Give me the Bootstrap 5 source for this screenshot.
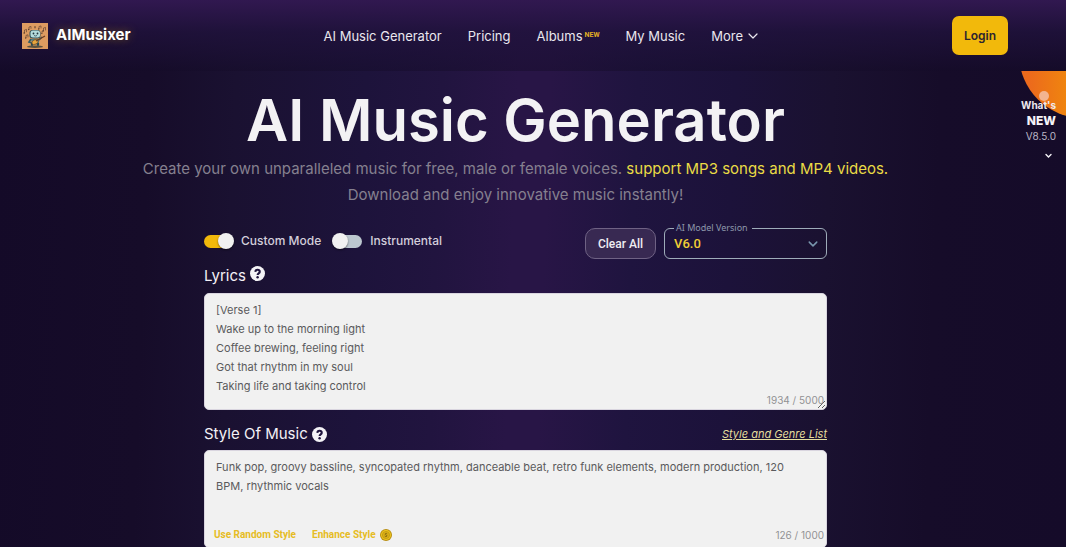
<!DOCTYPE html>
<html lang="en">
<head>
<meta charset="utf-8">
<meta name="viewport" content="width=device-width, initial-scale=1">
<title>AI Music Generator - AIMusixer</title>
<link href="https://cdn.jsdelivr.net/npm/bootstrap@5.3.0/dist/css/bootstrap.min.css" rel="stylesheet">
<style>
  :root { --gold: #f2b90b; --paper: #f1f1f1; }
  body {
    font-family: Inter, "Liberation Sans", sans-serif;
    color: #f1f1f3;
    min-height: 100vh;
    overflow-x: hidden;
    background: linear-gradient(92deg, #140a28 0%, #160c29 14%, #1a1131 22%, #1d133b 34%, #21143f 41%, #281546 48%, #281546 51%, #1f143f 59%, #1c123a 68%, #1a1130 77%, #160c29 87%, #150b29 100%);
  }
  .topbar {
    min-height: 71px;
    padding: 0 58px 0 22px;
    background: linear-gradient(180deg, rgba(49,24,80,1) 0%, rgba(32,18,60,.8) 45%, rgba(20,11,40,.45) 100%);
  }
  .brand-name { font-size: 15px; font-weight: 700; text-shadow: 0 0 10px rgba(242,185,11,.4); }
  .topbar .nav-link { font-size: 13px; line-height: 20px; color: #eae7ee; padding: 0; white-space: nowrap; }
  .site-nav { gap: 26px; }
  .new-tag { font: 700 7px/10px Roboto, sans-serif; color: #e0ac25; margin-left: 2px; }
  .btn-login { background: var(--gold); color: #2c2430; font-size: 12px; font-weight: 600; line-height: 19px; padding: 10px 12px; border: 0; border-radius: 7px; }
  .btn-login:hover { background: #ffc928; }
  .page { padding: 13px 35px 0 0; }
  .hero-title { font-size: 58px; line-height: 72px; font-weight: 600; margin: 0; color: #f3f2f4; }
  .hero-text { font-size: 15px; line-height: 26px; color: #85808f; margin: 0 auto; max-width: 760px; }
  .hero-text em { font-style: normal; color: #eadb45; }
  .composer { max-width: 623px; margin-top: 16px; }
  .mode { min-height: 0; padding: 0; margin: 0; display: flex; align-items: center; }
  .mode label { font-size: 12px; line-height: 20px; font-weight: 500; color: #d3cedb; }
  .mode .form-check-input {
    appearance: none; position: relative; float: none; margin: 0; border: 0; width: 29px; height: 13px; border-radius: 7px;
    background: #bcc7cf; box-shadow: none;
  }
  .mode .form-check-input::after {
    content: ""; position: absolute; left: -1px; top: -2px; width: 16px; height: 16px; border-radius: 50%;
    background: #f1f1f1; box-shadow: 0 1px 2px rgba(0,0,0,.5);
  }
  .mode .form-check-input:checked { background: var(--gold); }
  .mode .form-check-input:checked::after { left: 14px; }
  .btn-clear { font: 500 12px/18px Roboto, sans-serif; color: #efedf2; padding: 5px 12px; height: 31px; border: 1px solid #6f6284; border-radius: 10px; background: #382952; }
  .btn-clear:hover { background: #46356a; color: #fff; }
  .model-box { width: 163px; height: 35px; margin: 0; padding: 0 4px 0 9px; border: 1px solid #9eacb9; border-radius: 6px; min-width: 0; }
  .model-box legend { float: none; width: auto; margin: 0; padding: 0 4px 0 2px; font: 400 9px/8px "Noto Sans", sans-serif; color: #8d98ab; }
  .model-box legend label { display: block; }
  .model-box .form-select {
    font: 500 13px/20px Roboto, sans-serif; color: #f2cf35; background-color: transparent; border: 0; padding: 0; height: 24px;
    background-image: url("data:image/svg+xml,%3csvg xmlns='http://www.w3.org/2000/svg' viewBox='0 0 16 16'%3e%3cpath fill='none' stroke='%237896ad' stroke-width='2.4' stroke-linecap='round' stroke-linejoin='round' d='M2 5l6 6 6-6'/%3e%3c/svg%3e");
    background-size: 10px; background-position: right 4px center;
  }
  .model-box option { color: #222; }
  .field-label { font-size: 15px; line-height: 20px; font-weight: 400; color: #f3f1f6; }
  .lyrics-row { padding: 3px 0 7px; }
  .style-row { padding: 14px 0 6px; }
  .help { border: 0; background: none; padding: 0; line-height: 0; color: #f4f3f6; }
  .entry { position: relative; }
  .entry textarea {
    display: block; font-size: 11px; line-height: 19px; color: #5a5a5c; background: var(--paper);
    border: 1px solid #d9d5df; border-radius: 5px; padding: 7px 20px 7px 11px; overflow: hidden;
  }
  .entry textarea:focus { color: #444; background: #fff; }
  #lyrics { height: 117px; resize: vertical; }
  #style { height: 98px; resize: none; }
  .counter { position: absolute; right: 3px; bottom: 2px; font-size: 10px; line-height: 15px; color: #929294; }
  .entry-tools { position: absolute; left: 10px; right: 3px; bottom: 5px; }
  .entry-tools .counter { position: static; }
  .tool-link { font: 700 10px/16px Roboto, sans-serif; color: #e6bc24; border: 0; background: none; padding: 0; }
  .genre-link { font-size: 11px; line-height: 20px; font-style: italic; color: #e4dd9d; }
  .whats-new { position: absolute; top: 71px; right: 0; width: 60px; height: 89px; overflow: hidden; padding: 27px 10px 0 0; background: none; border: 0; text-align: right; color: #f5f3f7; }
  .whats-new .disc { position: absolute; left: 0; top: 0; }
  .whats-new .copy { position: relative; display: flex; flex-direction: column; align-items: flex-end; }
  .wn-top { font-size: 10px; line-height: 14px; font-weight: 700; color: #efe9ee; white-space: nowrap; }
  .wn-main { font-size: 12px; line-height: 17px; font-weight: 800; }
  .wn-ver { font-size: 10px; line-height: 14px; color: #bbb6c5; }
</style>
</head>
<body>
<header class="topbar d-flex align-items-center justify-content-between">
  <a href="#" class="d-flex align-items-center text-decoration-none text-white gap-2">
    <svg width="26" height="26" viewBox="0 0 26 26" aria-hidden="true">
      <rect width="26" height="26" fill="#dd9b60"/>
      <ellipse cx="13" cy="23.7" rx="8" ry="1.3" fill="#5a513f"/>
      <g fill="none" stroke="#563a2b" stroke-width=".6">
        <path d="M2.500 10V7l2-.6v2.800M7 6.500V4l2-.6v2.400M4 15v-2.600l2-.6v2.600M17 6V3.500l2-.6v2.500M21.500 8V5l2-.6v3M20 10.500V8.200l1.500-.6M13 5.500V3.500"/>
      </g>
      <g fill="#563a2b"><circle cx="2.200" cy="10" r=".8"/><circle cx="6.700" cy="6.500" r=".7"/><circle cx="3.700" cy="15" r=".7"/><circle cx="16.700" cy="6" r=".7"/><circle cx="21.200" cy="8" r=".7"/><circle cx="19.800" cy="10.500" r=".6"/><circle cx="13" cy="4" r=".7"/></g>
      <rect x="7.500" y="7" width="11" height="8.500" rx="3" fill="#2d5058"/>
      <rect x="8.500" y="7.500" width="9.500" height="7" rx="2.500" fill="#b5dcdc"/>
      <circle cx="11.500" cy="10.500" r=".9" fill="#21343c"/><circle cx="15.500" cy="10.500" r=".9" fill="#21343c"/>
      <path d="M12 12.500q1.500 1 3 0" stroke="#21343c" stroke-width=".7" fill="none"/>
      <path d="M9 16h8.500l-1 5.500h-6z" fill="#4e7f84"/>
      <path d="M9 16l-2 3 3 1M17 17l3-3" stroke="#315a62" stroke-width="1.600" fill="none"/>
      <path d="M10 22.800V20M16 22.800V20" stroke="#264952" stroke-width="2.200"/>
      <ellipse cx="13" cy="19" rx="3.300" ry="2.200" fill="#e6a73e" stroke="#6e4120" stroke-width=".6" transform="rotate(-28 13 19)"/>
      <path d="M14 18l9-5" stroke="#6a3c22" stroke-width="1.300"/>
    </svg>
    <span class="brand-name">AIMusixer</span>
  </a>
  <nav class="site-nav d-flex align-items-center">
    <a class="nav-link" href="#">AI Music Generator</a>
    <a class="nav-link" href="#">Pricing</a>
    <a class="nav-link d-flex" href="#">Albums<span class="new-tag mt-1">NEW</span></a>
    <a class="nav-link" href="#">My Music</a>
    <a class="nav-link d-flex align-items-center gap-1" href="#">More
      <svg width="12" height="12" viewBox="0 0 12 12" fill="none" stroke="currentColor" stroke-width="1.200" stroke-linecap="round" stroke-linejoin="round"><path d="M2 4l4 4 4-4"/></svg>
    </a>
  </nav>
  <button type="button" class="btn btn-login">Login</button>
</header>

<main class="page text-center">
  <h1 class="hero-title">AI Music Generator</h1>
  <p class="hero-text">Create your own unparalleled music for free, male or female voices. <em>support MP3 songs and MP4 videos.</em><br>Download and enjoy innovative music instantly!</p>

  <form class="composer mx-auto text-start">
    <div class="d-flex justify-content-between align-items-end">
      <div class="d-flex align-items-center gap-2 pb-2">
        <div class="form-check mode">
          <input class="form-check-input" type="checkbox" role="switch" id="custom" checked>
          <label class="ms-2" for="custom">Custom Mode</label>
        </div>
        <div class="form-check mode">
          <input class="form-check-input ms-1" type="checkbox" role="switch" id="instrumental">
          <label class="ms-2" for="instrumental">Instrumental</label>
        </div>
      </div>
      <div class="d-flex align-items-end">
        <button type="button" class="btn btn-clear me-2">Clear All</button>
        <fieldset class="model-box">
          <legend><label for="model">AI Model Version</label></legend>
          <select class="form-select" id="model"><option>V6.0</option></select>
        </fieldset>
      </div>
    </div>

    <div class="lyrics-row d-flex align-items-start gap-1">
      <label class="field-label pt-1" for="lyrics">Lyrics</label>
      <button type="button" class="help pt-1" aria-label="About lyrics">
        <svg width="15" height="15" viewBox="0 0 16 16"><circle cx="8" cy="8" r="8" fill="currentColor"/><path d="M5.700 6.300C5.800 3.200 10.700 3.500 10.400 6.300C10.300 7.900 8.100 7.900 8.100 9.600" fill="none" stroke="#1f143d" stroke-width="2.200"/><circle cx="8.100" cy="12" r="1.300" fill="#1f143d"/></svg>
      </button>
    </div>
    <div class="entry">
      <textarea class="form-control" id="lyrics">[Verse 1]
Wake up to the morning light
Coffee brewing, feeling right
Got that rhythm in my soul
Taking life and taking control</textarea>
      <span class="counter">1934 / 5000</span>
    </div>

    <div class="style-row d-flex align-items-center justify-content-between">
      <div class="d-flex align-items-center gap-1">
        <label class="field-label" for="style">Style Of Music</label>
        <button type="button" class="help" aria-label="About style of music">
          <svg width="15" height="15" viewBox="0 0 16 16"><circle cx="8" cy="8" r="8" fill="currentColor"/><path d="M5.700 6.300C5.800 3.200 10.700 3.500 10.400 6.300C10.300 7.900 8.100 7.900 8.100 9.600" fill="none" stroke="#1f143d" stroke-width="2.200"/><circle cx="8.100" cy="12" r="1.300" fill="#1f143d"/></svg>
        </button>
      </div>
      <a class="genre-link" href="#">Style and Genre List</a>
    </div>
    <div class="entry">
      <textarea class="form-control" id="style">Funk pop, groovy bassline, syncopated rhythm, danceable beat, retro funk elements, modern production, 120 BPM, rhythmic vocals</textarea>
      <div class="entry-tools d-flex align-items-center">
        <button type="button" class="tool-link">Use Random Style</button>
        <button type="button" class="tool-link d-flex align-items-center gap-1 ms-3">Enhance Style
          <svg width="12" height="12" viewBox="0 0 12 12"><circle cx="6" cy="6" r="6" fill="#b98e11"/><circle cx="6" cy="6" r="5" fill="#edc51c"/><circle cx="6" cy="6" r="3.600" fill="#d9af17" stroke="#b58b13" stroke-width=".6"/><path d="M7.200 4.800C6.200 4 4.900 4.500 5.100 5.300S7.200 6 7 6.900S5.300 7.800 4.700 7" fill="none" stroke="#74580f" stroke-width=".8"/></svg>
        </button>
        <span class="counter ms-auto">126 / 1000</span>
      </div>
    </div>
  </form>
</main>

<button type="button" class="whats-new" aria-label="What's new in V8.5.0">
  <svg class="disc" width="60" height="60" viewBox="0 0 60 60" aria-hidden="true">
    <defs><linearGradient id="flame" x1="0" y1="0" x2="1" y2="0"><stop offset=".08" stop-color="#ec6a1c"/><stop offset=".42" stop-color="#f0890d"/></linearGradient></defs>
    <circle cx="77" cy="-17" r="64" fill="url(#flame)"/>
    <circle cx="38" cy="25" r="5" fill="#f3b48f"/>
  </svg>
  <span class="copy">
    <span class="wn-top">What's</span>
    <span class="wn-main">NEW</span>
    <span class="wn-ver">V8.5.0</span>
    <svg class="mt-2 me-1" width="7" height="9" viewBox="0 0 7 9" fill="none" stroke="currentColor" stroke-width="1.400" stroke-linecap="round"><path d="M1 3.500l2.500 2.500L6 3.500"/></svg>
  </span>
</button>
<script src="https://cdn.jsdelivr.net/npm/bootstrap@5.3.0/dist/js/bootstrap.bundle.min.js"></script>
</body>
</html>
